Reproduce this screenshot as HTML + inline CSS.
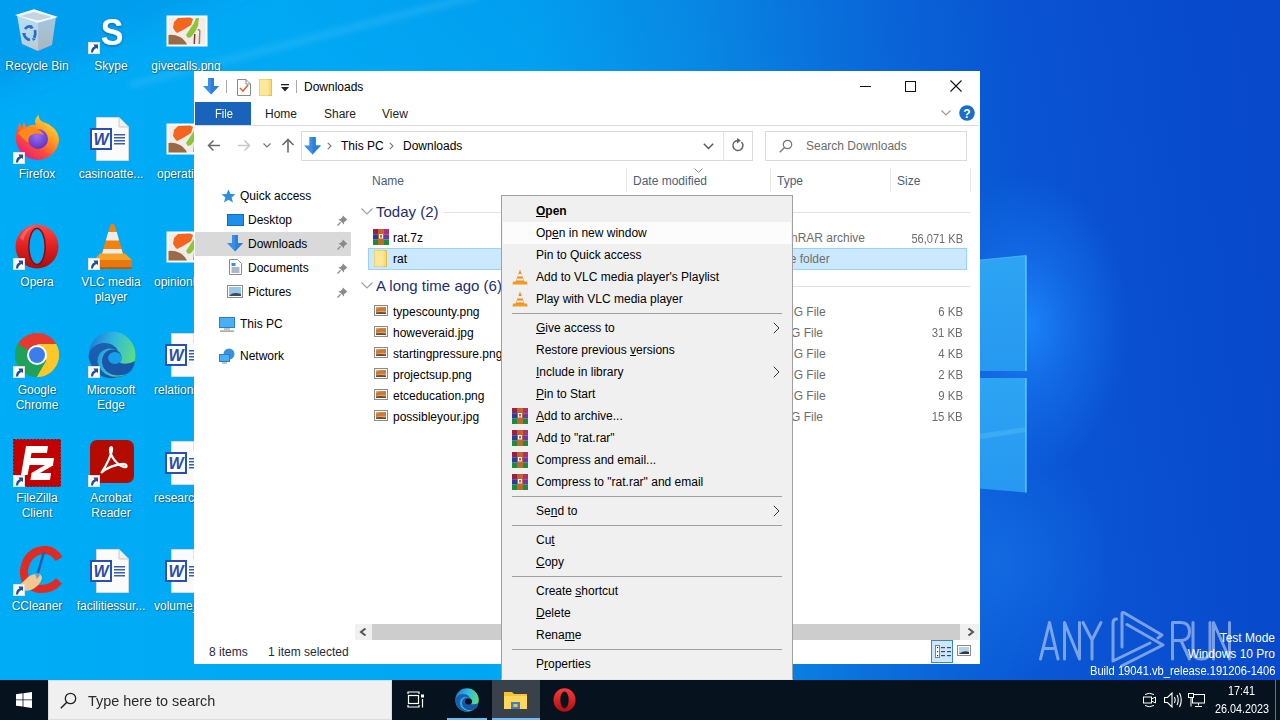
<!DOCTYPE html><html><head><meta charset="utf-8"><style>
*{margin:0;padding:0;box-sizing:border-box}
html,body{width:1280px;height:720px;overflow:hidden;font-family:"Liberation Sans",sans-serif}
body{position:relative;background:#0a5ad2}
.t{position:absolute;white-space:nowrap}
.a{position:absolute}
.lbl{position:absolute;width:76px;text-align:center;color:#fff;font-size:12px;line-height:15px;text-shadow:0 0 2px rgba(0,0,0,.4),1px 1px 1px rgba(0,0,0,.3)}
</style></head><body>
<svg class="a" style="left:0;top:0" width="1280" height="720" viewBox="0 0 1280 720">
<defs>
<linearGradient id="bg" x1="0" y1="0" x2="1280" y2="0" gradientUnits="userSpaceOnUse">
 <stop offset="0" stop-color="#00acf6"/>
 <stop offset="0.42" stop-color="#02a6f2"/>
 <stop offset="0.55" stop-color="#0890e8"/>
 <stop offset="0.68" stop-color="#0a70dc"/>
 <stop offset="0.80" stop-color="#0a58d6"/>
 <stop offset="1" stop-color="#084acc"/>
</linearGradient>
<linearGradient id="topdark" x1="1280" y1="0" x2="900" y2="500" gradientUnits="userSpaceOnUse">
 <stop offset="0" stop-color="#0640c4" stop-opacity="0.3"/>
 <stop offset="1" stop-color="#0640c4" stop-opacity="0"/>
</linearGradient>
<radialGradient id="glow" cx="1028" cy="325" r="100" gradientUnits="userSpaceOnUse" gradientTransform="translate(1028 325) scale(1 1.5) translate(-1028 -325)">
 <stop offset="0" stop-color="#1a84fa" stop-opacity="1"/>
 <stop offset="0.5" stop-color="#1a78f0" stop-opacity="0.5"/>
 <stop offset="1" stop-color="#1a78f0" stop-opacity="0"/>
</radialGradient>
<radialGradient id="glow2" cx="1000" cy="560" r="120" gradientUnits="userSpaceOnUse">
 <stop offset="0" stop-color="#1a78ec" stop-opacity="0.5"/>
 <stop offset="1" stop-color="#1a78ec" stop-opacity="0"/>
</radialGradient>
<linearGradient id="pane" x1="0" y1="0" x2="0" y2="1">
 <stop offset="0" stop-color="#2ea4f4"/>
 <stop offset="1" stop-color="#2698f0"/>
</linearGradient>
</defs>
<rect width="1280" height="720" fill="url(#bg)"/>
<rect width="1280" height="720" fill="url(#topdark)"/>
<filter id="bl" x="-50%" y="-50%" width="200%" height="200%"><feGaussianBlur stdDeviation="14"/></filter>
<filter id="bl2" x="-50%" y="-50%" width="200%" height="200%"><feGaussianBlur stdDeviation="3"/></filter>
<polygon points="-40,-40 300,-40 -40,110" fill="#0a5ac0" fill-opacity="0.16" filter="url(#bl)"/>
<line x1="130" y1="85" x2="480" y2="-5" stroke="#7ad8ff" stroke-width="5" stroke-opacity="0.25" filter="url(#bl2)"/>
<rect width="1280" height="720" fill="url(#glow)"/>
<rect width="1280" height="720" fill="url(#glow2)"/>
<polygon points="900,268 1026,255.5 1026,371 900,371" fill="url(#pane)"/>
<polygon points="900,378 1026,378 1026,492.5 900,482" fill="url(#pane)"/>
<polygon points="900,445 1026,427 1026,432 900,452" fill="#5cc4fa" fill-opacity="0.35"/>
<line x1="1026" y1="255.5" x2="1026" y2="371" stroke="#6ad4ff" stroke-width="1.2"/>
<line x1="1026" y1="378" x2="1026" y2="492.5" stroke="#6ad4ff" stroke-width="1.2"/>
<line x1="900" y1="268" x2="1026" y2="255.5" stroke="#5cc8fa" stroke-width="1" stroke-opacity="0.6"/>
</svg>
<svg class="a" style="left:15px;top:8px" width="44" height="46" viewBox="0 0 44 46">
<defs><linearGradient id="rbL" x1="0" y1="0" x2="0" y2="1"><stop offset="0" stop-color="#d6e6f0"/><stop offset="0.7" stop-color="#cadcea"/><stop offset="1" stop-color="#e8c8b8"/></linearGradient>
<linearGradient id="rbR" x1="0" y1="0" x2="0" y2="1"><stop offset="0" stop-color="#b8cede"/><stop offset="1" stop-color="#c4b8b8"/></linearGradient></defs>
<path d="M2 7 L23 14 L23 43 L7 36Z" fill="url(#rbL)" fill-opacity="0.88"/>
<path d="M23 14 L41 9 L37 37 L23 43Z" fill="url(#rbR)" fill-opacity="0.88"/>
<path d="M2 7 L19 2 L41 9 L23 14Z" fill="#eef6fb" stroke="#f8fcff" stroke-width="1.2"/>
<path d="M5 8 L19 4 L37 9 L23 12.5Z" fill="#c4d4e0"/>
<g fill="none" stroke="#2a6cc0" stroke-width="2.6">
<path d="M10 21 Q13 17 17 19"/><path d="M20 22 Q21 27 19 30"/><path d="M15 32 Q10 31 9 26"/></g>
<path d="M16 17 L19 20 L15 21Z M17 30 L21 31 L18 33Z M7 25 L9 29 L11 25Z" fill="#2a6cc0"/>
</svg>
<div class="lbl" style="left:-1px;top:59px">Recycle Bin</div>
<svg class="a" style="left:96px;top:12px" width="32" height="36" viewBox="0 0 32 36">
<defs><filter id="sksh" x="-30%" y="-30%" width="160%" height="160%"><feDropShadow dx="0" dy="1" stdDeviation="1.6" flood-color="#0a3a80" flood-opacity="0.6"/></filter></defs>
<text x="16" y="32.5" font-family="Liberation Sans" font-weight="bold" font-size="37" fill="#fff" text-anchor="middle" transform="translate(16 0) scale(0.92 1) translate(-16 0)" filter="url(#sksh)">S</text>
</svg>
<div class="a" style="left:88px;top:42px;width:12px;height:12px;background:#fafafa;border:1px solid #e0e0e0"><svg width="10" height="10" viewBox="0 0 10 10" style="position:absolute;left:0;top:0"><path d="M2 9.5 Q2 4.5 5.5 3.5 L4.5 1.5 L9 1.5 L9 6 L7.5 5 Q4.5 6 4 9.5Z" fill="#23508f"/></svg></div>
<div class="lbl" style="left:73px;top:59px">Skype</div>
<svg class="a" style="left:166px;top:15px" width="42" height="32" viewBox="0 0 42 32">
<rect x="0.5" y="0.5" width="41" height="31" fill="#fdfdfd"/>
<rect x="2.5" y="2.5" width="37" height="27" fill="#f1ece6"/>
<path d="M2.5 20 Q8 19 14 22 Q19 25 21 29.5 L2.5 29.5Z" fill="#9a6a48"/>
<path d="M7 13 L8 7 L12 3 L24 2.5 L27 4 L25 10 L17 15 L11 18 L9 16Z" fill="#f4651e"/>
<path d="M20 20 L24 14 L28 8 L30 3 L33 3 L32 11 L29 17 L25 22 L22 23Z" fill="#8cc43a"/>
<path d="M28 19 L27.5 29 L29 29 L29.5 19Z" fill="#8a3a30"/>
<path d="M31 15 Q34 15 33 19 L32.5 29 L34 29 L34.5 17 Q35 14 32 14Z" fill="#a87a70"/>
</svg>
<div class="lbl" style="left:148px;top:59px">givecalls.png</div>
<svg class="a" style="left:13px;top:113px" width="48" height="49" viewBox="0 0 48 49">
<defs><linearGradient id="ff1" x1="0.8" y1="0.1" x2="0.2" y2="0.9"><stop offset="0" stop-color="#ffd83a"/><stop offset="0.35" stop-color="#ff9a22"/><stop offset="0.7" stop-color="#ff4a3a"/><stop offset="1" stop-color="#e8207a"/></linearGradient>
<radialGradient id="ff2" cx="0.45" cy="0.35" r="0.7"><stop offset="0" stop-color="#9a6cf8"/><stop offset="1" stop-color="#5a30c0"/></radialGradient></defs>
<path d="M24 47 A22 22 0 0 1 3 22 Q4 14 7 10 L9 15 L11 9 L13 14 Q18 11 23 12 Q20 6 26 2 Q25 8 33 10 Q46 16 46 28 A22 22 0 0 1 24 47Z" fill="url(#ff1)"/>
<circle cx="25" cy="26" r="10" fill="url(#ff2)"/>
<path d="M5 20 Q12 12 22 15 Q28 17 31 22 Q24 19 18 22 Q14 25 16 30 Q10 26 5 20Z" fill="#ff8a1a"/>
</svg>
<div class="a" style="left:13px;top:152px;width:12px;height:12px;background:#fafafa;border:1px solid #e0e0e0"><svg width="10" height="10" viewBox="0 0 10 10" style="position:absolute;left:0;top:0"><path d="M2 9.5 Q2 4.5 5.5 3.5 L4.5 1.5 L9 1.5 L9 6 L7.5 5 Q4.5 6 4 9.5Z" fill="#23508f"/></svg></div>
<div class="lbl" style="left:-1px;top:167px">Firefox</div>
<svg class="a" style="left:88px;top:116px" width="42" height="46" viewBox="0 0 42 46">
<path d="M8.5 1.5 H31 L40.5 11 V44.5 H8.5 Z" fill="#fbfbfb" stroke="#d6d6d6"/>
<path d="M31 1.5 V11 H40.5" fill="#f0f0f0" stroke="#c8c8c8"/>
<rect x="26" y="18" width="11" height="1.5" fill="#3a5eae"/><rect x="26" y="21" width="11" height="1.5" fill="#3a5eae"/><rect x="26" y="24" width="11" height="1.5" fill="#3a5eae"/><rect x="26" y="27" width="11" height="1.5" fill="#3a5eae"/>
<rect x="3" y="13" width="20" height="20" fill="#fff" stroke="#2850b0" stroke-width="2"/>
<text x="13" y="29" font-family="Liberation Sans" font-weight="bold" font-style="italic" font-size="16" fill="#2a4fa8" text-anchor="middle">W</text>
</svg>
<div class="lbl" style="left:73px;top:167px">casinoatte...</div>
<svg class="a" style="left:166px;top:123px" width="42" height="32" viewBox="0 0 42 32">
<rect x="0.5" y="0.5" width="41" height="31" fill="#fdfdfd"/>
<rect x="2.5" y="2.5" width="37" height="27" fill="#f1ece6"/>
<path d="M2.5 20 Q8 19 14 22 Q19 25 21 29.5 L2.5 29.5Z" fill="#9a6a48"/>
<path d="M7 13 L8 7 L12 3 L24 2.5 L27 4 L25 10 L17 15 L11 18 L9 16Z" fill="#f4651e"/>
<path d="M20 20 L24 14 L28 8 L30 3 L33 3 L32 11 L29 17 L25 22 L22 23Z" fill="#8cc43a"/>
<path d="M28 19 L27.5 29 L29 29 L29.5 19Z" fill="#8a3a30"/>
<path d="M31 15 Q34 15 33 19 L32.5 29 L34 29 L34.5 17 Q35 14 32 14Z" fill="#a87a70"/>
</svg>
<div class="lbl" style="left:157px;top:167px;width:auto;text-align:left;white-space:nowrap">operations...</div>
<svg class="a" style="left:14px;top:223px" width="46" height="47" viewBox="0 0 46 47">
<defs><linearGradient id="op" x1="0" y1="0" x2="0" y2="1"><stop offset="0" stop-color="#ff4a4a"/><stop offset="0.5" stop-color="#e0201e"/><stop offset="1" stop-color="#a80c10"/></linearGradient></defs>
<ellipse cx="23" cy="23.5" rx="21.5" ry="22" fill="url(#op)"/>
<ellipse cx="23" cy="23.5" rx="8.2" ry="18" fill="#02aaf4" stroke="#8a0a14" stroke-width="1.6"/>
<path d="M6 14 Q12 3 23 2 Q12 6 9 18Z" fill="#ff9090" fill-opacity="0.45"/>
</svg>
<div class="a" style="left:13px;top:258px;width:12px;height:12px;background:#fafafa;border:1px solid #e0e0e0"><svg width="10" height="10" viewBox="0 0 10 10" style="position:absolute;left:0;top:0"><path d="M2 9.5 Q2 4.5 5.5 3.5 L4.5 1.5 L9 1.5 L9 6 L7.5 5 Q4.5 6 4 9.5Z" fill="#23508f"/></svg></div>
<div class="lbl" style="left:-1px;top:275px">Opera</div>
<svg class="a" style="left:95px;top:223px" width="40" height="47" viewBox="0 0 40 47">
<path d="M15.5 2 Q17.5 0 19.5 2 L29 33 L6 33 Z" fill="#f2820e"/>
<path d="M13.2 9 L21.8 9 L24.1 17.5 L10.9 17.5Z" fill="#ececec"/>
<path d="M8.6 26 L26.4 26 L28.6 33 L6.4 33Z" fill="#ececec"/>
<path d="M5 30.5 H30 L37 37 H-1Z" fill="#f7a02a"/>
<path d="M-1 37 H37 L37 45.5 H-1Z" fill="#e8780e"/>
<path d="M-1 44 H37 V46 H-1Z" fill="#c05a08"/>
</svg>
<div class="a" style="left:88px;top:258px;width:12px;height:12px;background:#fafafa;border:1px solid #e0e0e0"><svg width="10" height="10" viewBox="0 0 10 10" style="position:absolute;left:0;top:0"><path d="M2 9.5 Q2 4.5 5.5 3.5 L4.5 1.5 L9 1.5 L9 6 L7.5 5 Q4.5 6 4 9.5Z" fill="#23508f"/></svg></div>
<div class="lbl" style="left:73px;top:275px">VLC media<br>player</div>
<svg class="a" style="left:166px;top:231px" width="42" height="32" viewBox="0 0 42 32">
<rect x="0.5" y="0.5" width="41" height="31" fill="#fdfdfd"/>
<rect x="2.5" y="2.5" width="37" height="27" fill="#f1ece6"/>
<path d="M2.5 20 Q8 19 14 22 Q19 25 21 29.5 L2.5 29.5Z" fill="#9a6a48"/>
<path d="M7 13 L8 7 L12 3 L24 2.5 L27 4 L25 10 L17 15 L11 18 L9 16Z" fill="#f4651e"/>
<path d="M20 20 L24 14 L28 8 L30 3 L33 3 L32 11 L29 17 L25 22 L22 23Z" fill="#8cc43a"/>
<path d="M28 19 L27.5 29 L29 29 L29.5 19Z" fill="#8a3a30"/>
<path d="M31 15 Q34 15 33 19 L32.5 29 L34 29 L34.5 17 Q35 14 32 14Z" fill="#a87a70"/>
</svg>
<div class="lbl" style="left:154px;top:275px;width:auto;text-align:left;white-space:nowrap">opinionlook...</div>
<svg class="a" style="left:14px;top:332px" width="46" height="46" viewBox="0 0 46 46">
<circle cx="23" cy="23" r="22" fill="#1fa15a"/>
<path d="M23 1 A22 22 0 0 1 42 12 L23 12 Z" fill="#e53a2f"/>
<path d="M4 12 A22 22 0 0 1 42 12 L23 23 Z" fill="#e53a2f"/>
<path d="M42 12 A22 22 0 0 1 23 45 L32.5 28.5Z" fill="#fcc72a"/>
<path d="M42 12 L23 12 L32.5 28.5 L23 45 A22 22 0 0 0 42 12Z" fill="#fcc72a"/>
<path d="M4 12 L14 29 L23 45 A22 22 0 0 1 4 12Z" fill="#1fa15a"/>
<circle cx="23" cy="23" r="10" fill="#fff"/>
<circle cx="23" cy="23" r="8" fill="#3b7ded"/>
</svg>
<div class="a" style="left:13px;top:366px;width:12px;height:12px;background:#fafafa;border:1px solid #e0e0e0"><svg width="10" height="10" viewBox="0 0 10 10" style="position:absolute;left:0;top:0"><path d="M2 9.5 Q2 4.5 5.5 3.5 L4.5 1.5 L9 1.5 L9 6 L7.5 5 Q4.5 6 4 9.5Z" fill="#23508f"/></svg></div>
<div class="lbl" style="left:-1px;top:383px">Google<br>Chrome</div>
<svg class="a" style="left:88px;top:331px" width="48" height="48" viewBox="0 0 48 48">
<defs><linearGradient id="ed1" x1="0" y1="0.3" x2="1" y2="0.6"><stop offset="0" stop-color="#1c7cd6"/><stop offset="0.45" stop-color="#30b8e0"/><stop offset="1" stop-color="#5ee07a"/></linearGradient>
<linearGradient id="ed2" x1="0" y1="0" x2="1" y2="1"><stop offset="0" stop-color="#1a5cb0"/><stop offset="1" stop-color="#134a98"/></linearGradient></defs>
<circle cx="24" cy="24" r="23.5" fill="url(#ed1)"/>
<path d="M0.5 26 Q2 14 14 12 Q26 11 30 20 Q20 14 12 22 Q6 30 14 40 Q22 48 34 45 Q42 42 47 36 Q40 46 24 47.5 Q6 47 0.5 26Z" fill="url(#ed2)" opacity="0.9"/>
<path d="M16 23 Q22 16 30 20 Q36 24 32 32 Q40 34 47 30 Q46 38 40 42 Q28 48 18 40 Q11 33 16 23Z" fill="#1a56a8"/>
<ellipse cx="27" cy="27" rx="7" ry="6" fill="#16a0ea"/>
</svg>
<div class="a" style="left:88px;top:366px;width:12px;height:12px;background:#fafafa;border:1px solid #e0e0e0"><svg width="10" height="10" viewBox="0 0 10 10" style="position:absolute;left:0;top:0"><path d="M2 9.5 Q2 4.5 5.5 3.5 L4.5 1.5 L9 1.5 L9 6 L7.5 5 Q4.5 6 4 9.5Z" fill="#23508f"/></svg></div>
<div class="lbl" style="left:73px;top:383px">Microsoft<br>Edge</div>
<svg class="a" style="left:163px;top:332px" width="42" height="46" viewBox="0 0 42 46">
<path d="M8.5 1.5 H31 L40.5 11 V44.5 H8.5 Z" fill="#fbfbfb" stroke="#d6d6d6"/>
<path d="M31 1.5 V11 H40.5" fill="#f0f0f0" stroke="#c8c8c8"/>
<rect x="26" y="18" width="11" height="1.5" fill="#3a5eae"/><rect x="26" y="21" width="11" height="1.5" fill="#3a5eae"/><rect x="26" y="24" width="11" height="1.5" fill="#3a5eae"/><rect x="26" y="27" width="11" height="1.5" fill="#3a5eae"/>
<rect x="3" y="13" width="20" height="20" fill="#fff" stroke="#2850b0" stroke-width="2"/>
<text x="13" y="29" font-family="Liberation Sans" font-weight="bold" font-style="italic" font-size="16" fill="#2a4fa8" text-anchor="middle">W</text>
</svg>
<div class="lbl" style="left:154px;top:383px;width:auto;text-align:left;white-space:nowrap">relationship...</div>
<svg class="a" style="left:13px;top:439px" width="48" height="48" viewBox="0 0 48 48">
<rect x="0.5" y="0.5" width="47" height="47" fill="#c20000" stroke="#a00000" stroke-width="1.2" stroke-dasharray="1.8 1.6"/>
<g fill="#fff">
<polygon points="13,7 35,7 34,14 18.5,14 17.6,19 41,19 40,26 16.5,26 14.6,36 8,36"/>
<polygon points="33,26 41,26 27,34 38,34 37,41 17.5,41 18.5,34 32,26"/>
</g>
</svg>
<div class="a" style="left:13px;top:475px;width:12px;height:12px;background:#fafafa;border:1px solid #e0e0e0"><svg width="10" height="10" viewBox="0 0 10 10" style="position:absolute;left:0;top:0"><path d="M2 9.5 Q2 4.5 5.5 3.5 L4.5 1.5 L9 1.5 L9 6 L7.5 5 Q4.5 6 4 9.5Z" fill="#23508f"/></svg></div>
<div class="lbl" style="left:-1px;top:491px">FileZilla<br>Client</div>
<svg class="a" style="left:90px;top:440px" width="44" height="44" viewBox="0 0 44 44">
<rect x="0" y="0" width="44" height="43" rx="7" fill="#b30b00"/>
<path d="M12 32 C16 26 22 14 22 9 C22 6 20 7 20 10 C20 16 28 26 34 27 C38 28 37 24 33 24 C26 24 16 28 11 33" fill="none" stroke="#fff" stroke-width="2.3"/>
</svg>
<div class="a" style="left:88px;top:475px;width:12px;height:12px;background:#fafafa;border:1px solid #e0e0e0"><svg width="10" height="10" viewBox="0 0 10 10" style="position:absolute;left:0;top:0"><path d="M2 9.5 Q2 4.5 5.5 3.5 L4.5 1.5 L9 1.5 L9 6 L7.5 5 Q4.5 6 4 9.5Z" fill="#23508f"/></svg></div>
<div class="lbl" style="left:73px;top:491px">Acrobat<br>Reader</div>
<svg class="a" style="left:163px;top:440px" width="42" height="46" viewBox="0 0 42 46">
<path d="M8.5 1.5 H31 L40.5 11 V44.5 H8.5 Z" fill="#fbfbfb" stroke="#d6d6d6"/>
<path d="M31 1.5 V11 H40.5" fill="#f0f0f0" stroke="#c8c8c8"/>
<rect x="26" y="18" width="11" height="1.5" fill="#3a5eae"/><rect x="26" y="21" width="11" height="1.5" fill="#3a5eae"/><rect x="26" y="24" width="11" height="1.5" fill="#3a5eae"/><rect x="26" y="27" width="11" height="1.5" fill="#3a5eae"/>
<rect x="3" y="13" width="20" height="20" fill="#fff" stroke="#2850b0" stroke-width="2"/>
<text x="13" y="29" font-family="Liberation Sans" font-weight="bold" font-style="italic" font-size="16" fill="#2a4fa8" text-anchor="middle">W</text>
</svg>
<div class="lbl" style="left:154px;top:491px;width:auto;text-align:left;white-space:nowrap">researchspec...</div>
<svg class="a" style="left:13px;top:546px" width="50" height="48" viewBox="0 0 50 48">
<path d="M46 13 Q40 3 30 4 Q14 6 11 24 Q10 40 26 43 Q38 44 46 35" fill="none" stroke="#e02a24" stroke-width="8"/>
<path d="M31 6 L24 30" stroke="#2a5aa8" stroke-width="2.5"/>
<path d="M22 28 Q28 26 29 32 Q27 40 18 44 Q10 46 3 42 Q8 38 12 34 Q16 29 22 28Z" fill="#f2c890"/>
<path d="M22 28 Q26 27 27 29 L24 33Z" fill="#6aa0d8"/>
</svg>
<div class="a" style="left:13px;top:584px;width:12px;height:12px;background:#fafafa;border:1px solid #e0e0e0"><svg width="10" height="10" viewBox="0 0 10 10" style="position:absolute;left:0;top:0"><path d="M2 9.5 Q2 4.5 5.5 3.5 L4.5 1.5 L9 1.5 L9 6 L7.5 5 Q4.5 6 4 9.5Z" fill="#23508f"/></svg></div>
<div class="lbl" style="left:-1px;top:599px">CCleaner</div>
<svg class="a" style="left:88px;top:548px" width="42" height="46" viewBox="0 0 42 46">
<path d="M8.5 1.5 H31 L40.5 11 V44.5 H8.5 Z" fill="#fbfbfb" stroke="#d6d6d6"/>
<path d="M31 1.5 V11 H40.5" fill="#f0f0f0" stroke="#c8c8c8"/>
<rect x="26" y="18" width="11" height="1.5" fill="#3a5eae"/><rect x="26" y="21" width="11" height="1.5" fill="#3a5eae"/><rect x="26" y="24" width="11" height="1.5" fill="#3a5eae"/><rect x="26" y="27" width="11" height="1.5" fill="#3a5eae"/>
<rect x="3" y="13" width="20" height="20" fill="#fff" stroke="#2850b0" stroke-width="2"/>
<text x="13" y="29" font-family="Liberation Sans" font-weight="bold" font-style="italic" font-size="16" fill="#2a4fa8" text-anchor="middle">W</text>
</svg>
<div class="lbl" style="left:73px;top:599px">facilitiessur...</div>
<svg class="a" style="left:163px;top:548px" width="42" height="46" viewBox="0 0 42 46">
<path d="M8.5 1.5 H31 L40.5 11 V44.5 H8.5 Z" fill="#fbfbfb" stroke="#d6d6d6"/>
<path d="M31 1.5 V11 H40.5" fill="#f0f0f0" stroke="#c8c8c8"/>
<rect x="26" y="18" width="11" height="1.5" fill="#3a5eae"/><rect x="26" y="21" width="11" height="1.5" fill="#3a5eae"/><rect x="26" y="24" width="11" height="1.5" fill="#3a5eae"/><rect x="26" y="27" width="11" height="1.5" fill="#3a5eae"/>
<rect x="3" y="13" width="20" height="20" fill="#fff" stroke="#2850b0" stroke-width="2"/>
<text x="13" y="29" font-family="Liberation Sans" font-weight="bold" font-style="italic" font-size="16" fill="#2a4fa8" text-anchor="middle">W</text>
</svg>
<div class="lbl" style="left:154px;top:599px;width:auto;text-align:left;white-space:nowrap">volume_manual...</div>
<div class="a" style="left:194px;top:71px;width:786px;height:593px;background:#fff"></div>
<svg class="a" style="left:203px;top:78px" width="16" height="17" viewBox="0 0 16 17">
<path d="M5 0 H11 V8 H16 L8 16.5 L0 8 H5 Z" fill="#3a8ee6"/><path d="M8 0 H11 V8 H16 L8 16.5Z" fill="#2f7fd8"/></svg>
<div class="a" style="left:226px;top:80px;width:1px;height:13px;background:#a8a8a8"></div>
<svg class="a" style="left:237px;top:79px" width="14" height="17" viewBox="0 0 14 17">
<path d="M0.5 0.5 H9 L13.5 5 V16.5 H0.5Z" fill="#fff" stroke="#8a8a8a"/><path d="M9 0.5 V5 H13.5" fill="none" stroke="#8a8a8a"/>
<path d="M3 9 L6 12 L11 6" fill="none" stroke="#d86a3a" stroke-width="1.6"/></svg>
<svg class="a" style="left:259px;top:79px" width="14" height="17" viewBox="0 0 14 17">
<rect x="0.5" y="0.5" width="12" height="16" fill="#f8dc78" stroke="#e4c250"/><rect x="0.5" y="0.5" width="9" height="16" fill="#fde89a"/></svg>
<svg class="a" style="left:281px;top:84px" width="8" height="8" viewBox="0 0 8 8"><rect x="0" y="0" width="8" height="1.3" fill="#222"/><path d="M0 3 H8 L4 7.5Z" fill="#222"/></svg>
<div class="a" style="left:296px;top:80px;width:1px;height:13px;background:#a8a8a8"></div>
<div class="t" style="left:304px;top:81px;font-size:12px;line-height:12px;color:#000;">Downloads</div>
<div class="a" style="left:860px;top:86px;width:11px;height:1px;background:#111"></div>
<div class="a" style="left:905px;top:81px;width:11px;height:11px;border:1px solid #111"></div>
<svg class="a" style="left:950px;top:80px" width="12" height="12" viewBox="0 0 12 12"><path d="M0.5 0.5 L11.5 11.5 M11.5 0.5 L0.5 11.5" stroke="#111" stroke-width="1.1"/></svg>
<div class="a" style="left:195px;top:102px;width:56px;height:23px;background:#1a63ba"></div>
<div class="t" style="left:215px;top:108px;font-size:12px;line-height:12px;color:#fff;transform:scaleX(0.93);transform-origin:0 0;">File</div>
<div class="t" style="left:265px;top:108px;font-size:12px;line-height:12px;color:#222;">Home</div>
<div class="t" style="left:324px;top:108px;font-size:12px;line-height:12px;color:#222;">Share</div>
<div class="t" style="left:382px;top:108px;font-size:12px;line-height:12px;color:#222;">View</div>
<div class="a" style="left:195px;top:125px;width:784px;height:1px;background:#dadbdc"></div>
<svg class="a" style="left:941px;top:110px" width="10" height="6" viewBox="0 0 10 6"><path d="M0.5 0.5 L5 5 L9.5 0.5" fill="none" stroke="#9a9a9a" stroke-width="1.2"/></svg>
<svg class="a" style="left:959px;top:105px" width="16" height="16" viewBox="0 0 16 16"><circle cx="8" cy="8" r="7.8" fill="#1a6fc4"/>
<text x="8" y="12.5" font-family="Liberation Sans" font-weight="bold" font-size="12" fill="#fff" text-anchor="middle">?</text></svg>
<svg class="a" style="left:207px;top:139px" width="14" height="13" viewBox="0 0 14 13"><path d="M13 6.5 H1.5 M6.5 1.5 L1.5 6.5 L6.5 11.5" fill="none" stroke="#6a6a6a" stroke-width="1.5"/></svg>
<svg class="a" style="left:237px;top:139px" width="14" height="13" viewBox="0 0 14 13"><path d="M1 6.5 H12.5 M7.5 1.5 L12.5 6.5 L7.5 11.5" fill="none" stroke="#c8c8c8" stroke-width="1.5"/></svg>
<svg class="a" style="left:263px;top:143px" width="8" height="5" viewBox="0 0 8 5"><path d="M0.5 0.5 L4 4 L7.5 0.5" fill="none" stroke="#777" stroke-width="1.2"/></svg>
<svg class="a" style="left:281px;top:138px" width="14" height="15" viewBox="0 0 14 15"><path d="M7 14.5 V2 M1.5 7 L7 1.5 L12.5 7" fill="none" stroke="#6a6a6a" stroke-width="1.6"/></svg>
<div class="a" style="left:301px;top:131px;width:452px;height:30px;border:1px solid #d9d9d9"></div>
<div class="a" style="left:723px;top:131px;width:1px;height:30px;background:#e3e3e3"></div>
<svg class="a" style="left:304px;top:137px" width="17" height="18" viewBox="0 0 16 17">
<path d="M5 0 H11 V8 H16 L8 16.5 L0 8 H5 Z" fill="#3a8ee6"/><path d="M8 0 H11 V8 H16 L8 16.5Z" fill="#2f7fd8"/></svg>
<svg class="a" style="left:327px;top:142px" width="5" height="8" viewBox="0 0 5 8"><path d="M0.8 0.8 L4 4 L0.8 7.2" fill="none" stroke="#777" stroke-width="1.1"/></svg>
<div class="t" style="left:341px;top:140px;font-size:12px;line-height:12px;color:#000;">This PC</div>
<svg class="a" style="left:389px;top:142px" width="5" height="8" viewBox="0 0 5 8"><path d="M0.8 0.8 L4 4 L0.8 7.2" fill="none" stroke="#777" stroke-width="1.1"/></svg>
<div class="t" style="left:403px;top:140px;font-size:12px;line-height:12px;color:#000;">Downloads</div>
<svg class="a" style="left:703px;top:143px" width="11" height="7" viewBox="0 0 11 7"><path d="M0.8 0.8 L5.5 5.5 L10.2 0.8" fill="none" stroke="#555" stroke-width="1.4"/></svg>
<svg class="a" style="left:731px;top:138px" width="14" height="15" viewBox="0 0 14 15"><path d="M10.5 4 A5 5 0 1 1 7 2.5" fill="none" stroke="#666" stroke-width="1.5"/><path d="M6 0 L10 2.5 L6 5.5Z" fill="#666"/></svg>
<div class="a" style="left:765px;top:131px;width:202px;height:30px;border:1px solid #d9d9d9"></div>
<svg class="a" style="left:779px;top:139px" width="14" height="14" viewBox="0 0 14 14"><circle cx="8.5" cy="5.5" r="4.2" fill="none" stroke="#777" stroke-width="1.2"/><path d="M5.5 8.5 L0.8 13.2" stroke="#777" stroke-width="1.3"/></svg>
<div class="t" style="left:806px;top:140px;font-size:12px;line-height:12px;color:#6d6d6d;">Search Downloads</div>
<div class="a" style="left:195px;top:232px;width:156px;height:24px;background:#d9d9d9"></div>
<svg class="a" style="left:221px;top:189px" width="15" height="14" viewBox="0 0 15 14"><path d="M7.5 0.5 L9.5 5 L14.5 5.3 L10.6 8.5 L12 13.5 L7.5 10.8 L3 13.5 L4.4 8.5 L0.5 5.3 L5.5 5Z" fill="#2d8ee0"/></svg>
<div class="t" style="left:240px;top:190px;font-size:12px;line-height:12px;color:#000;">Quick access</div>
<div class="a" style="left:227px;top:214px;width:17px;height:12px;background:#1e90ea;border:1px solid #0d6cc4"></div>
<div class="t" style="left:248px;top:214px;font-size:12px;line-height:12px;color:#000;">Desktop</div>
<svg class="a" style="left:227px;top:235px" width="16" height="17" viewBox="0 0 16 17">
<path d="M5 0 H11 V8 H16 L8 16.5 L0 8 H5 Z" fill="#3a8ee6"/><path d="M8 0 H11 V8 H16 L8 16.5Z" fill="#2f7fd8"/></svg>
<div class="t" style="left:248px;top:238px;font-size:12px;line-height:12px;color:#000;">Downloads</div>
<svg class="a" style="left:229px;top:259px" width="13" height="16" viewBox="0 0 13 16"><path d="M0.5 0.5 H8.5 L12.5 4.5 V15.5 H0.5Z" fill="#fff" stroke="#8a8a8a"/>
<rect x="2.5" y="4" width="4" height="3" fill="#3a8ee6"/><rect x="2.5" y="8.5" width="8" height="1" fill="#5a7090"/><rect x="2.5" y="10.5" width="8" height="1" fill="#5a7090"/><rect x="2.5" y="12.5" width="8" height="1" fill="#5a7090"/></svg>
<div class="t" style="left:248px;top:262px;font-size:12px;line-height:12px;color:#000;">Documents</div>
<svg class="a" style="left:227px;top:285px" width="16" height="13" viewBox="0 0 16 13"><rect x="0.5" y="0.5" width="15" height="12" fill="#fff" stroke="#8a8a8a"/><rect x="2" y="2" width="12" height="9" fill="#9cc6e8"/><path d="M2 11 Q6 6 14 9 V11Z" fill="#3a4a60"/></svg>
<div class="t" style="left:248px;top:286px;font-size:12px;line-height:12px;color:#000;">Pictures</div>
<svg class="a" style="left:337px;top:215px" width="11" height="11" viewBox="0 0 11 11"><path d="M6 0.5 L10.5 5 L9 5.5 L7 7.5 L7 9.5 L1.5 4 L3.5 4 L5.5 2Z" fill="#8a8a8a"/><path d="M3.5 7.5 L0.5 10.5" stroke="#8a8a8a" stroke-width="1.2"/></svg>
<svg class="a" style="left:337px;top:239px" width="11" height="11" viewBox="0 0 11 11"><path d="M6 0.5 L10.5 5 L9 5.5 L7 7.5 L7 9.5 L1.5 4 L3.5 4 L5.5 2Z" fill="#8a8a8a"/><path d="M3.5 7.5 L0.5 10.5" stroke="#8a8a8a" stroke-width="1.2"/></svg>
<svg class="a" style="left:337px;top:263px" width="11" height="11" viewBox="0 0 11 11"><path d="M6 0.5 L10.5 5 L9 5.5 L7 7.5 L7 9.5 L1.5 4 L3.5 4 L5.5 2Z" fill="#8a8a8a"/><path d="M3.5 7.5 L0.5 10.5" stroke="#8a8a8a" stroke-width="1.2"/></svg>
<svg class="a" style="left:337px;top:287px" width="11" height="11" viewBox="0 0 11 11"><path d="M6 0.5 L10.5 5 L9 5.5 L7 7.5 L7 9.5 L1.5 4 L3.5 4 L5.5 2Z" fill="#8a8a8a"/><path d="M3.5 7.5 L0.5 10.5" stroke="#8a8a8a" stroke-width="1.2"/></svg>
<svg class="a" style="left:219px;top:317px" width="16" height="15" viewBox="0 0 16 15"><rect x="0.5" y="0.5" width="15" height="10" fill="#4ab0f4" stroke="#2a80c8"/><rect x="5" y="11.5" width="6" height="1" fill="#888"/><rect x="1" y="13.5" width="14" height="1.2" fill="#888"/></svg>
<div class="t" style="left:240px;top:318px;font-size:12px;line-height:12px;color:#000;">This PC</div>
<svg class="a" style="left:219px;top:348px" width="16" height="16" viewBox="0 0 16 16"><circle cx="10" cy="6" r="5.5" fill="#3a90d8"/><rect x="0.5" y="6.5" width="10" height="7" fill="#4ab0f4" stroke="#2a80c8"/><rect x="3" y="14.5" width="5" height="1" fill="#888"/></svg>
<div class="t" style="left:240px;top:350px;font-size:12px;line-height:12px;color:#000;">Network</div>
<div class="t" style="left:372px;top:175px;font-size:12px;line-height:12px;color:#4c607a;">Name</div>
<div class="a" style="left:626px;top:168px;width:1px;height:24px;background:#e5e5e5"></div>
<svg class="a" style="left:694px;top:168px" width="9" height="5" viewBox="0 0 9 5"><path d="M0.5 0.5 L4.5 4.5 L8.5 0.5" fill="none" stroke="#888" stroke-width="1"/></svg>
<div class="t" style="left:633px;top:175px;font-size:12px;line-height:12px;color:#4c607a;">Date modified</div>
<div class="a" style="left:770px;top:168px;width:1px;height:24px;background:#e5e5e5"></div>
<div class="t" style="left:777px;top:175px;font-size:12px;line-height:12px;color:#4c607a;">Type</div>
<div class="a" style="left:890px;top:168px;width:1px;height:24px;background:#e5e5e5"></div>
<div class="t" style="left:897px;top:175px;font-size:12px;line-height:12px;color:#4c607a;">Size</div>
<div class="a" style="left:970px;top:168px;width:1px;height:24px;background:#e5e5e5"></div>
<svg class="a" style="left:361px;top:208px" width="12" height="7" viewBox="0 0 12 7"><path d="M0.5 0.5 L6 6 L11.5 0.5" fill="none" stroke="#9aa0a8" stroke-width="1.1"/></svg>
<div class="t" style="left:376px;top:204px;font-size:15px;line-height:15px;color:#1e2d6b;">Today (2)</div>
<div class="a" style="left:444px;top:212px;width:526px;height:1px;background:#e2e2e2"></div>
<svg class="a" style="left:373px;top:229px" width="16" height="16" viewBox="0 0 16 16">
<rect x="0" y="0" width="8" height="5.3" fill="#9a2040"/><rect x="8" y="0" width="8" height="5.3" fill="#b0306a"/><rect x="0" y="5.3" width="8" height="5.3" fill="#2a3c98"/><rect x="8" y="5.3" width="8" height="5.3" fill="#6a38b0"/><rect x="0" y="10.6" width="16" height="5.4" fill="#1f8a3a"/>
<rect x="5" y="0" width="6" height="16" fill="#c8682a" fill-opacity="0.9"/>
<rect x="6" y="5" width="4" height="4.5" fill="#f0f0f0"/><rect x="7" y="6" width="2" height="2.5" fill="#c8682a"/></svg>
<div class="t" style="left:393px;top:232px;font-size:12px;line-height:12px;color:#000;">rat.7z</div>
<div class="t" style="left:777px;top:232px;font-size:12px;line-height:12px;color:#6d6d6d;">WinRAR archive</div>
<div class="t" style="right:317px;top:233px;font-size:12px;line-height:12px;color:#6d6d6d;text-align:right;transform:scaleX(0.92);transform-origin:100% 0;">56,071 KB</div>
<div class="a" style="left:368px;top:248px;width:599px;height:22px;background:#cce8ff;border:1px solid #99d1ff"></div>
<svg class="a" style="left:374px;top:250px" width="14" height="17" viewBox="0 0 14 17"><rect x="0.5" y="0.5" width="12" height="16" fill="#f8dc78" stroke="#e0be4a"/><rect x="0.5" y="0.5" width="9" height="16" fill="#fde698"/></svg>
<div class="t" style="left:393px;top:253px;font-size:12px;line-height:12px;color:#000;">rat</div>
<div class="t" style="left:777px;top:253px;font-size:12px;line-height:12px;color:#6d6d6d;">File folder</div>
<svg class="a" style="left:361px;top:282px" width="12" height="7" viewBox="0 0 12 7"><path d="M0.5 0.5 L6 6 L11.5 0.5" fill="none" stroke="#9aa0a8" stroke-width="1.1"/></svg>
<div class="t" style="left:376px;top:278px;font-size:15px;line-height:15px;color:#1e2d6b;">A long time ago (6)</div>
<div class="a" style="left:520px;top:286px;width:450px;height:1px;background:#e2e2e2"></div>
<svg class="a" style="left:374px;top:305px" width="14" height="11" viewBox="0 0 14 11"><rect x="0.5" y="0.5" width="13" height="10" fill="#fff" stroke="#8a8a8a"/><rect x="2" y="2" width="10" height="7" fill="#e8a060"/><path d="M2 4 Q6 1.5 10 2.5 L12 2 V6 Q7 5 2 7Z" fill="#c87a38"/><path d="M2 7.5 Q6 6.5 12 7.5 V9 H2Z" fill="#6a4a30"/></svg>
<div class="t" style="left:393px;top:306px;font-size:12px;line-height:12px;color:#000;">typescounty.png</div>
<div class="t" style="left:777px;top:306px;font-size:12px;line-height:12px;color:#6d6d6d;">PNG File</div>
<div class="t" style="right:317px;top:306px;font-size:12px;line-height:12px;color:#6d6d6d;text-align:right;transform:scaleX(0.95);transform-origin:100% 0;">6 KB</div>
<svg class="a" style="left:374px;top:326px" width="14" height="11" viewBox="0 0 14 11"><rect x="0.5" y="0.5" width="13" height="10" fill="#fff" stroke="#8a8a8a"/><rect x="2" y="2" width="10" height="7" fill="#e8a060"/><path d="M2 4 Q6 1.5 10 2.5 L12 2 V6 Q7 5 2 7Z" fill="#c87a38"/><path d="M2 7.5 Q6 6.5 12 7.5 V9 H2Z" fill="#6a4a30"/></svg>
<div class="t" style="left:393px;top:327px;font-size:12px;line-height:12px;color:#000;">howeveraid.jpg</div>
<div class="t" style="left:777px;top:327px;font-size:12px;line-height:12px;color:#6d6d6d;">JPG File</div>
<div class="t" style="right:317px;top:327px;font-size:12px;line-height:12px;color:#6d6d6d;text-align:right;transform:scaleX(0.95);transform-origin:100% 0;">31 KB</div>
<svg class="a" style="left:374px;top:347px" width="14" height="11" viewBox="0 0 14 11"><rect x="0.5" y="0.5" width="13" height="10" fill="#fff" stroke="#8a8a8a"/><rect x="2" y="2" width="10" height="7" fill="#e8a060"/><path d="M2 4 Q6 1.5 10 2.5 L12 2 V6 Q7 5 2 7Z" fill="#c87a38"/><path d="M2 7.5 Q6 6.5 12 7.5 V9 H2Z" fill="#6a4a30"/></svg>
<div class="t" style="left:393px;top:348px;font-size:12px;line-height:12px;color:#000;">startingpressure.png</div>
<div class="t" style="left:777px;top:348px;font-size:12px;line-height:12px;color:#6d6d6d;">PNG File</div>
<div class="t" style="right:317px;top:348px;font-size:12px;line-height:12px;color:#6d6d6d;text-align:right;transform:scaleX(0.95);transform-origin:100% 0;">4 KB</div>
<svg class="a" style="left:374px;top:368px" width="14" height="11" viewBox="0 0 14 11"><rect x="0.5" y="0.5" width="13" height="10" fill="#fff" stroke="#8a8a8a"/><rect x="2" y="2" width="10" height="7" fill="#e8a060"/><path d="M2 4 Q6 1.5 10 2.5 L12 2 V6 Q7 5 2 7Z" fill="#c87a38"/><path d="M2 7.5 Q6 6.5 12 7.5 V9 H2Z" fill="#6a4a30"/></svg>
<div class="t" style="left:393px;top:369px;font-size:12px;line-height:12px;color:#000;">projectsup.png</div>
<div class="t" style="left:777px;top:369px;font-size:12px;line-height:12px;color:#6d6d6d;">PNG File</div>
<div class="t" style="right:317px;top:369px;font-size:12px;line-height:12px;color:#6d6d6d;text-align:right;transform:scaleX(0.95);transform-origin:100% 0;">2 KB</div>
<svg class="a" style="left:374px;top:389px" width="14" height="11" viewBox="0 0 14 11"><rect x="0.5" y="0.5" width="13" height="10" fill="#fff" stroke="#8a8a8a"/><rect x="2" y="2" width="10" height="7" fill="#e8a060"/><path d="M2 4 Q6 1.5 10 2.5 L12 2 V6 Q7 5 2 7Z" fill="#c87a38"/><path d="M2 7.5 Q6 6.5 12 7.5 V9 H2Z" fill="#6a4a30"/></svg>
<div class="t" style="left:393px;top:390px;font-size:12px;line-height:12px;color:#000;">etceducation.png</div>
<div class="t" style="left:777px;top:390px;font-size:12px;line-height:12px;color:#6d6d6d;">PNG File</div>
<div class="t" style="right:317px;top:390px;font-size:12px;line-height:12px;color:#6d6d6d;text-align:right;transform:scaleX(0.95);transform-origin:100% 0;">9 KB</div>
<svg class="a" style="left:374px;top:410px" width="14" height="11" viewBox="0 0 14 11"><rect x="0.5" y="0.5" width="13" height="10" fill="#fff" stroke="#8a8a8a"/><rect x="2" y="2" width="10" height="7" fill="#e8a060"/><path d="M2 4 Q6 1.5 10 2.5 L12 2 V6 Q7 5 2 7Z" fill="#c87a38"/><path d="M2 7.5 Q6 6.5 12 7.5 V9 H2Z" fill="#6a4a30"/></svg>
<div class="t" style="left:393px;top:411px;font-size:12px;line-height:12px;color:#000;">possibleyour.jpg</div>
<div class="t" style="left:777px;top:411px;font-size:12px;line-height:12px;color:#6d6d6d;">JPG File</div>
<div class="t" style="right:317px;top:411px;font-size:12px;line-height:12px;color:#6d6d6d;text-align:right;transform:scaleX(0.95);transform-origin:100% 0;">15 KB</div>
<div class="a" style="left:355px;top:624px;width:624px;height:16px;background:#f0f0f0"></div>
<div class="a" style="left:372px;top:624px;width:588px;height:16px;background:#cdcdcd"></div>
<svg class="a" style="left:359px;top:628px" width="8" height="8" viewBox="0 0 8 8"><path d="M6.5 0.5 L2 4 L6.5 7.5" fill="none" stroke="#555" stroke-width="2"/></svg>
<svg class="a" style="left:967px;top:628px" width="8" height="8" viewBox="0 0 8 8"><path d="M1.5 0.5 L6 4 L1.5 7.5" fill="none" stroke="#555" stroke-width="2"/></svg>
<div class="t" style="left:209px;top:646px;font-size:12px;line-height:12px;color:#1e2a3a;">8 items</div>
<div class="t" style="left:268px;top:646px;font-size:12px;line-height:12px;color:#1e2a3a;">1 item selected</div>
<div class="a" style="left:931px;top:640px;width:22px;height:23px;background:#cce8ff;border:1px solid #3d85c0"></div>
<svg class="a" style="left:935px;top:645px" width="16" height="13" viewBox="0 0 16 13"><rect x="0.5" y="0.5" width="4" height="12" fill="#fff" stroke="#9a7a6a"/><rect x="2" y="2" width="1.2" height="1.2" fill="#333"/><rect x="2" y="6" width="1.2" height="1.2" fill="#333"/><rect x="2" y="10" width="1.2" height="1.2" fill="#333"/>
<rect x="6" y="2" width="4" height="1.2" fill="#3a4a6a"/><rect x="12" y="2" width="4" height="1.2" fill="#3a4a6a"/><rect x="6" y="6" width="4" height="1.2" fill="#3a4a6a"/><rect x="12" y="6" width="4" height="1.2" fill="#3a4a6a"/><rect x="6" y="10" width="4" height="1.2" fill="#3a4a6a"/><rect x="12" y="10" width="4" height="1.2" fill="#3a4a6a"/></svg>
<svg class="a" style="left:957px;top:645px" width="14" height="11" viewBox="0 0 14 11"><rect x="0.5" y="0.5" width="13" height="10" fill="#fff" stroke="#8a8a8a"/><rect x="2" y="2" width="10" height="7" fill="#b8d4ea"/><path d="M2 9 Q6 5 12 7 V9Z" fill="#2a3a50"/></svg>
<div class="a" style="left:501px;top:195px;width:292px;height:485px;background:#f0f0f0;border:1px solid #a0a0a0;border-bottom-color:#e8e8e8"></div>
<div class="a" style="left:503px;top:222px;width:288px;height:22px;background:#fcfcfc"></div>
<div class="t" style="left:536px;top:205px;font-size:12px;line-height:12px;color:#000;font-weight:bold;"><u>O</u>pen</div>
<div class="t" style="left:536px;top:227px;font-size:12px;line-height:12px;color:#000;">Op<u>e</u>n in new window</div>
<div class="t" style="left:536px;top:249px;font-size:12px;line-height:12px;color:#000;">Pin to Quick access</div>
<svg class="a" style="left:512px;top:269px" width="16" height="16" viewBox="0 0 16 16">
<path d="M8 0.5 L12.5 13 L3.5 13Z" fill="#f08a1a"/><path d="M6.3 5 L9.7 5 L10.4 7.5 L5.6 7.5Z" fill="#eee"/><path d="M5 9.5 L11 9.5 L11.6 11.5 L4.4 11.5Z" fill="#eee"/>
<path d="M1 12.5 H15 L15.5 15.5 H0.5Z" fill="#f39a20"/></svg>
<div class="t" style="left:536px;top:271px;font-size:12px;line-height:12px;color:#000;">Add to VLC media player's Playlist</div>
<svg class="a" style="left:512px;top:291px" width="16" height="16" viewBox="0 0 16 16">
<path d="M8 0.5 L12.5 13 L3.5 13Z" fill="#f08a1a"/><path d="M6.3 5 L9.7 5 L10.4 7.5 L5.6 7.5Z" fill="#eee"/><path d="M5 9.5 L11 9.5 L11.6 11.5 L4.4 11.5Z" fill="#eee"/>
<path d="M1 12.5 H15 L15.5 15.5 H0.5Z" fill="#f39a20"/></svg>
<div class="t" style="left:536px;top:293px;font-size:12px;line-height:12px;color:#000;">Play with VLC media player</div>
<div class="a" style="left:512px;top:313px;width:270px;height:1px;background:#a0a0a0"></div>
<div class="t" style="left:536px;top:322px;font-size:12px;line-height:12px;color:#000;"><u>G</u>ive access to</div>
<svg class="a" style="left:773px;top:322px" width="7" height="12" viewBox="0 0 7 12"><path d="M0.8 0.8 L6 6 L0.8 11.2" fill="none" stroke="#333" stroke-width="1"/></svg>
<div class="t" style="left:536px;top:344px;font-size:12px;line-height:12px;color:#000;">Restore previous <u>v</u>ersions</div>
<div class="t" style="left:536px;top:366px;font-size:12px;line-height:12px;color:#000;"><u>I</u>nclude in library</div>
<svg class="a" style="left:773px;top:366px" width="7" height="12" viewBox="0 0 7 12"><path d="M0.8 0.8 L6 6 L0.8 11.2" fill="none" stroke="#333" stroke-width="1"/></svg>
<div class="t" style="left:536px;top:388px;font-size:12px;line-height:12px;color:#000;"><u>P</u>in to Start</div>
<svg class="a" style="left:512px;top:408px" width="16" height="16" viewBox="0 0 16 16">
<rect x="0" y="0" width="8" height="5.3" fill="#9a2040"/><rect x="8" y="0" width="8" height="5.3" fill="#b0306a"/><rect x="0" y="5.3" width="8" height="5.3" fill="#2a3c98"/><rect x="8" y="5.3" width="8" height="5.3" fill="#6a38b0"/><rect x="0" y="10.6" width="16" height="5.4" fill="#1f8a3a"/>
<rect x="5" y="0" width="6" height="16" fill="#c8682a" fill-opacity="0.9"/>
<rect x="6" y="5" width="4" height="4.5" fill="#f0f0f0"/><rect x="7" y="6" width="2" height="2.5" fill="#c8682a"/></svg>
<div class="t" style="left:536px;top:410px;font-size:12px;line-height:12px;color:#000;"><u>A</u>dd to archive...</div>
<svg class="a" style="left:512px;top:430px" width="16" height="16" viewBox="0 0 16 16">
<rect x="0" y="0" width="8" height="5.3" fill="#9a2040"/><rect x="8" y="0" width="8" height="5.3" fill="#b0306a"/><rect x="0" y="5.3" width="8" height="5.3" fill="#2a3c98"/><rect x="8" y="5.3" width="8" height="5.3" fill="#6a38b0"/><rect x="0" y="10.6" width="16" height="5.4" fill="#1f8a3a"/>
<rect x="5" y="0" width="6" height="16" fill="#c8682a" fill-opacity="0.9"/>
<rect x="6" y="5" width="4" height="4.5" fill="#f0f0f0"/><rect x="7" y="6" width="2" height="2.5" fill="#c8682a"/></svg>
<div class="t" style="left:536px;top:432px;font-size:12px;line-height:12px;color:#000;">Add <u>t</u>o "rat.rar"</div>
<svg class="a" style="left:512px;top:452px" width="16" height="16" viewBox="0 0 16 16">
<rect x="0" y="0" width="8" height="5.3" fill="#9a2040"/><rect x="8" y="0" width="8" height="5.3" fill="#b0306a"/><rect x="0" y="5.3" width="8" height="5.3" fill="#2a3c98"/><rect x="8" y="5.3" width="8" height="5.3" fill="#6a38b0"/><rect x="0" y="10.6" width="16" height="5.4" fill="#1f8a3a"/>
<rect x="5" y="0" width="6" height="16" fill="#c8682a" fill-opacity="0.9"/>
<rect x="6" y="5" width="4" height="4.5" fill="#f0f0f0"/><rect x="7" y="6" width="2" height="2.5" fill="#c8682a"/></svg>
<div class="t" style="left:536px;top:454px;font-size:12px;line-height:12px;color:#000;">Compress and email...</div>
<svg class="a" style="left:512px;top:474px" width="16" height="16" viewBox="0 0 16 16">
<rect x="0" y="0" width="8" height="5.3" fill="#9a2040"/><rect x="8" y="0" width="8" height="5.3" fill="#b0306a"/><rect x="0" y="5.3" width="8" height="5.3" fill="#2a3c98"/><rect x="8" y="5.3" width="8" height="5.3" fill="#6a38b0"/><rect x="0" y="10.6" width="16" height="5.4" fill="#1f8a3a"/>
<rect x="5" y="0" width="6" height="16" fill="#c8682a" fill-opacity="0.9"/>
<rect x="6" y="5" width="4" height="4.5" fill="#f0f0f0"/><rect x="7" y="6" width="2" height="2.5" fill="#c8682a"/></svg>
<div class="t" style="left:536px;top:476px;font-size:12px;line-height:12px;color:#000;">Compress to "rat.rar" and email</div>
<div class="a" style="left:512px;top:496px;width:270px;height:1px;background:#a0a0a0"></div>
<div class="t" style="left:536px;top:505px;font-size:12px;line-height:12px;color:#000;">Se<u>n</u>d to</div>
<svg class="a" style="left:773px;top:505px" width="7" height="12" viewBox="0 0 7 12"><path d="M0.8 0.8 L6 6 L0.8 11.2" fill="none" stroke="#333" stroke-width="1"/></svg>
<div class="a" style="left:512px;top:525px;width:270px;height:1px;background:#a0a0a0"></div>
<div class="t" style="left:536px;top:534px;font-size:12px;line-height:12px;color:#000;">Cu<u>t</u></div>
<div class="t" style="left:536px;top:556px;font-size:12px;line-height:12px;color:#000;"><u>C</u>opy</div>
<div class="a" style="left:512px;top:576px;width:270px;height:1px;background:#a0a0a0"></div>
<div class="t" style="left:536px;top:585px;font-size:12px;line-height:12px;color:#000;">Create <u>s</u>hortcut</div>
<div class="t" style="left:536px;top:607px;font-size:12px;line-height:12px;color:#000;"><u>D</u>elete</div>
<div class="t" style="left:536px;top:629px;font-size:12px;line-height:12px;color:#000;">Rena<u>m</u>e</div>
<div class="a" style="left:512px;top:649px;width:270px;height:1px;background:#a0a0a0"></div>
<div class="t" style="left:536px;top:658px;font-size:12px;line-height:12px;color:#000;">P<u>r</u>operties</div>
<svg class="a" style="left:0;top:0" width="1280" height="720" viewBox="0 0 1280 720" opacity="0.5">
<g fill="none" stroke="#e8f0ff" stroke-width="3" stroke-linejoin="round" stroke-linecap="round">
<path d="M1040.5 659 L1049.5 622.5 L1058 659 M1043.5 648.5 H1055.5"/>
<path d="M1064.5 659 V622.5 L1079.5 659 V622.5"/>
<path d="M1083 622.5 L1092 640 L1101 622.5 M1092 640 V659"/>
<path d="M1116.5 619 Q1113 619 1113 623 V661 L1150 643"/>
<path d="M1122 647 V614 Q1122 611.5 1124.5 613 L1162 635 L1158 638"/>
<path d="M1127 624.5 L1163 645 L1121.5 666"/>
<path d="M1172.5 659 V622.5 H1181 Q1189.5 622.5 1189.5 631.5 Q1189.5 640.5 1181 640.5 H1172.5 M1181 640.5 L1189.5 659"/>
<path d="M1193 622.5 V651 Q1193 659 1201.5 659 Q1210 659 1210 651 V622.5"/>
<path d="M1213.5 659 V622.5 L1229.5 659 V622.5"/>
</g></svg>
<div class="t" style="right:5px;top:632px;font-size:12px;line-height:12px;color:#fff;text-align:right;">Test Mode</div>
<div class="t" style="right:5px;top:648px;font-size:12px;line-height:12px;color:#fff;text-align:right;">Windows 10 Pro</div>
<div class="t" style="right:5px;top:665px;font-size:12px;line-height:12px;color:#fff;text-align:right;transform:scaleX(0.93);transform-origin:100% 0;">Build 19041.vb_release.191206-1406</div>
<div class="a" style="left:0;top:680px;width:1280px;height:40px;background:#07121f"></div>
<svg class="a" style="left:16px;top:692px" width="16" height="16" viewBox="0 0 16 16"><path d="M0 2.2 L6.6 1.3 V7.5 H0Z M7.4 1.2 L16 0 V7.5 H7.4Z M0 8.3 H6.6 V14.6 L0 13.7Z M7.4 8.3 H16 V16 L7.4 14.8Z" fill="#fff"/></svg>
<div class="a" style="left:48px;top:680px;width:344px;height:40px;background:#f0f0f0;border:1px solid #dcdcdc"></div>
<svg class="a" style="left:60px;top:692px" width="17" height="17" viewBox="0 0 17 17"><circle cx="10.5" cy="6.5" r="5.2" fill="none" stroke="#222" stroke-width="1.3"/><path d="M6.8 10.2 L0.8 16.2" stroke="#222" stroke-width="1.5"/></svg>
<div class="t" style="left:88px;top:693px;font-size:15px;line-height:15px;color:#2a2a2a;transform:scaleX(0.96);transform-origin:0 0;">Type here to search</div>
<svg class="a" style="left:407px;top:691px" width="18" height="17" viewBox="0 0 18 17"><g fill="none" stroke="#fff" stroke-width="1.2"><path d="M1 3 V1 H12 V3 M1 14 V16 H12 V14"/><rect x="1.5" y="4.5" width="10" height="8"/><path d="M15.5 8 V16.5"/></g><rect x="14" y="3.5" width="3" height="3" fill="#fff"/></svg>
<svg class="a" style="left:455px;top:688px" width="24" height="24" viewBox="0 0 48 48">
<defs><linearGradient id="ed1b" x1="0" y1="0.3" x2="1" y2="0.6"><stop offset="0" stop-color="#1c7cd6"/><stop offset="0.45" stop-color="#30b8e0"/><stop offset="1" stop-color="#5ee07a"/></linearGradient>
<linearGradient id="ed2b" x1="0" y1="0" x2="1" y2="1"><stop offset="0" stop-color="#1a5cb0"/><stop offset="1" stop-color="#134a98"/></linearGradient></defs>
<circle cx="24" cy="24" r="23.5" fill="url(#ed1b)"/>
<path d="M0.5 26 Q2 14 14 12 Q26 11 30 20 Q20 14 12 22 Q6 30 14 40 Q22 48 34 45 Q42 42 47 36 Q40 46 24 47.5 Q6 47 0.5 26Z" fill="url(#ed2b)" opacity="0.9"/>
<path d="M16 23 Q22 16 30 20 Q36 24 32 32 Q40 34 47 30 Q46 38 40 42 Q28 48 18 40 Q11 33 16 23Z" fill="#1a56a8"/>
<ellipse cx="27" cy="27" rx="7" ry="6" fill="#07121f"/>
</svg>
<div class="a" style="left:447px;top:718px;width:40px;height:2px;background:#76b9ed"></div>
<div class="a" style="left:492px;top:680px;width:48px;height:40px;background:#39424b"></div>
<div class="a" style="left:492px;top:718px;width:48px;height:2px;background:#76b9ed"></div>
<svg class="a" style="left:504px;top:690px" width="23" height="20" viewBox="0 0 23 20"><path d="M0 2 H8 L10 4 H23 V19 H0Z" fill="#f5c33a"/><rect x="0" y="6" width="23" height="13" fill="#ffd85a"/><rect x="7" y="12" width="9" height="7" fill="#3c7fc8"/><rect x="9.5" y="14" width="4" height="3" fill="#f5c33a"/></svg>
<svg class="a" style="left:553px;top:688px" width="23" height="24" viewBox="0 0 23 24"><defs><linearGradient id="op2" x1="0" y1="0" x2="0" y2="1"><stop offset="0" stop-color="#ff3a3a"/><stop offset="1" stop-color="#b00d10"/></linearGradient></defs><ellipse cx="11.5" cy="12" rx="11" ry="11.8" fill="url(#op2)"/><ellipse cx="11.5" cy="12" rx="4.2" ry="8.5" fill="#07121f"/></svg>
<svg class="a" style="left:1143px;top:692px" width="13" height="16" viewBox="0 0 13 16"><g fill="none" stroke="#fff" stroke-width="1"><path d="M2 2.5 Q6 0 11 2.5 M2 13.5 Q6 16 11 13.5"/><rect x="0.5" y="5" width="8" height="6"/><path d="M8.5 7 L12.5 5 V11 L8.5 9"/></g></svg>
<svg class="a" style="left:1164px;top:692px" width="18" height="16" viewBox="0 0 18 16"><g fill="none" stroke="#fff" stroke-width="1.1"><path d="M0.5 5.5 H3.5 L8 1 V15 L3.5 10.5 H0.5Z"/><path d="M10.5 5 Q12 8 10.5 11"/><path d="M13 3 Q15.5 8 13 13"/><path d="M15.5 1 Q19 8 15.5 15"/></g></svg>
<svg class="a" style="left:1188px;top:693px" width="17" height="14" viewBox="0 0 17 14"><g fill="none" stroke="#fff" stroke-width="1"><rect x="4.5" y="1.5" width="12" height="8.5"/><path d="M10.5 10 V12.5 M7 13.5 H14"/><rect x="0.5" y="0.5" width="5" height="4" fill="#07121f"/><path d="M3 4.5 V13.5"/></g></svg>
<div class="t" style="left:1228px;top:685px;font-size:12px;line-height:12px;color:#fff;transform:scaleX(0.9);transform-origin:0 0;">17:41</div>
<div class="t" style="left:1215px;top:703px;font-size:12px;line-height:12px;color:#fff;transform:scaleX(0.9);transform-origin:0 0;">26.04.2023</div>
<div class="a" style="left:1275px;top:680px;width:1px;height:40px;background:#6a7078"></div>
</body></html>
